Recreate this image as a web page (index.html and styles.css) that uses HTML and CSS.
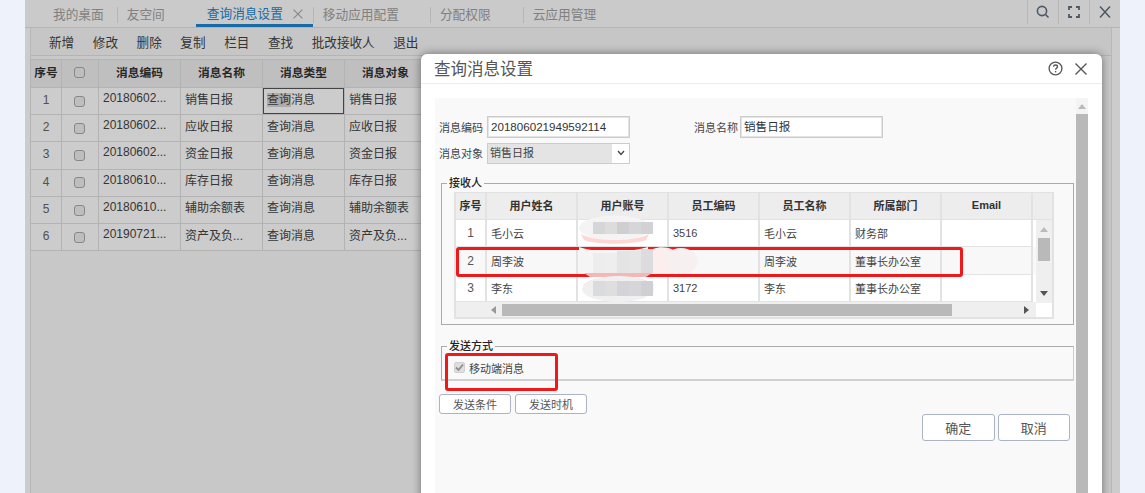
FILE: index.html
```html
<!DOCTYPE html>
<html lang="zh">
<head>
<meta charset="utf-8">
<title>查询消息设置</title>
<link rel="stylesheet" href="styles.css">
</head>
<body>
<div class="app">
  <nav class="tabs">
    <span class="tab tab-first">我的桌面</span>
    <span class="tab tab-sep tab-short">友空间</span>
    <span class="tab tab-active">查询消息设置<svg class="tab-x" width="10" height="10" viewBox="0 0 10 10"><path d="M0.5 0.5L9.5 9.5M9.5 0.5L0.5 9.5" stroke="#aaa" stroke-width="1.2" fill="none"/></svg></span>
    <span class="tab tab-sep">移动应用配置</span>
    <span class="tab tab-sep">分配权限</span>
    <span class="tab tab-sep tab-last">云应用管理</span>
    <div class="win-icons">
      <span class="win-icon"><svg width="16" height="16" viewBox="0 0 16 16"><circle cx="7" cy="7" r="4.6" stroke="#5f6f80" stroke-width="1.6" fill="none"/><path d="M10.5 10.5L13.5 13.5" stroke="#5f6f80" stroke-width="1.6"/></svg></span>
      <span class="win-icon"><svg width="16" height="16" viewBox="0 0 16 16"><path d="M3 6V3H6M10 3H13V6M13 10V13H10M6 13H3V10" stroke="#5f6f80" stroke-width="1.8" fill="none"/></svg></span>
      <span class="win-icon"><svg width="16" height="16" viewBox="0 0 16 16"><path d="M3 2.5L13 13.5M13 2.5L3 13.5" stroke="#5f6f80" stroke-width="1.5" fill="none"/></svg></span>
    </div>
  </nav>
  <div class="content">
    <div class="toolbar">
      <span>新增</span><span>修改</span><span>删除</span><span>复制</span><span>栏目</span><span>查找</span><span>批改接收人</span><span>退出</span>
    </div>
    <table class="list">
      <colgroup><col class="c-31"><col class="c-37"><col class="c-82"><col class="c-82"><col class="c-82"><col class="c-82"><col class="c-82"></colgroup>
      <thead><tr><th>序号</th><th class="mid"><i class="cb"></i></th><th>消息编码</th><th>消息名称</th><th>消息类型</th><th>消息对象</th><th></th></tr></thead>
      <tbody>
        <tr><td class="num">1</td><td class="mid"><i class="cb"></i></td><td>20180602...</td><td>销售日报</td><td class="focus"><span class="sel">查询</span>消息</td><td>销售日报</td><td></td></tr>
        <tr><td class="num">2</td><td class="mid"><i class="cb"></i></td><td>20180602...</td><td>应收日报</td><td>查询消息</td><td>应收日报</td><td></td></tr>
        <tr><td class="num">3</td><td class="mid"><i class="cb"></i></td><td>20180602...</td><td>资金日报</td><td>查询消息</td><td>资金日报</td><td></td></tr>
        <tr><td class="num">4</td><td class="mid"><i class="cb"></i></td><td>20180610...</td><td>库存日报</td><td>查询消息</td><td>库存日报</td><td></td></tr>
        <tr><td class="num">5</td><td class="mid"><i class="cb"></i></td><td>20180610...</td><td>辅助余额表</td><td>查询消息</td><td>辅助余额表</td><td></td></tr>
        <tr><td class="num">6</td><td class="mid"><i class="cb"></i></td><td>20190721...</td><td>资产及负...</td><td>查询消息</td><td>资产及负...</td><td></td></tr>
      </tbody>
    </table>
  </div>
  <div class="mask"></div>

  <section class="modal">
    <header class="modal-head">
      <h1>查询消息设置</h1>
      <svg class="help" width="15" height="15" viewBox="0 0 15 15"><circle cx="7.5" cy="7.5" r="6.4" stroke="#555" stroke-width="1.3" fill="none"/><path d="M5.5 5.8C5.6 4.5 6.5 4 7.5 4C8.7 4 9.5 4.7 9.5 5.7C9.5 7 7.6 7.1 7.6 8.8" stroke="#555" stroke-width="1.3" fill="none"/><rect x="6.9" y="10" width="1.4" height="1.4" fill="#555"/></svg>
      <svg class="close" width="14" height="14" viewBox="0 0 14 14"><path d="M1.5 1.5L12.5 12.5M12.5 1.5L1.5 12.5" stroke="#555" stroke-width="1.4" fill="none"/></svg>
    </header>
    <div class="panel">
      <div class="form">
        <div class="row">
          <label>消息编码</label><span class="input">201806021949592114</span>
          <label class="second">消息名称</label><span class="input">销售日报</span>
        </div>
        <div class="row row-2">
          <label>消息对象</label>
          <span class="select"><span class="select-val">销售日报</span><span class="select-arrow"><svg width="8" height="6" viewBox="0 0 8 6"><path d="M1 1L4 4.5L7 1" stroke="#444" stroke-width="1.3" fill="none"/></svg></span></span>
        </div>
        <fieldset class="group group-recv">
          <legend>接收人</legend>
          <div class="grid">
            <table class="people">
              <colgroup><col class="p-33"><col class="p-91"><col class="p-91"><col class="p-91"><col class="p-91"><col class="p-91"><col class="p-91"><col class="p-rest"></colgroup>
              <thead><tr><th>序号</th><th>用户姓名</th><th>用户账号</th><th>员工编码</th><th>员工名称</th><th>所属部门</th><th>Email</th><th></th></tr></thead>
              <tbody>
                <tr><td class="num">1</td><td>毛小云</td><td></td><td>3516</td><td>毛小云</td><td>财务部</td><td></td><td class="blank"></td></tr>
                <tr class="alt"><td class="num">2</td><td>周李波</td><td></td><td></td><td>周李波</td><td>董事长办公室</td><td></td><td class="blank"></td></tr>
                <tr><td class="num">3</td><td>李东</td><td></td><td>3172</td><td>李东</td><td>董事长办公室</td><td></td><td class="blank"></td></tr>
              </tbody>
            </table>
            <div class="hscroll">
              <span class="h-left"><svg width="5" height="8" viewBox="0 0 5 8"><path d="M5 0V8L0 4Z" fill="#999"/></svg></span>
              <span class="h-thumb"></span>
              <span class="h-right"><svg width="5" height="8" viewBox="0 0 5 8"><path d="M0 0V8L5 4Z" fill="#555"/></svg></span>
              <span class="h-corner"></span>
            </div>
            <div class="vbar">
              <svg class="v-up" width="8" height="5" viewBox="0 0 8 5"><path d="M0 5H8L4 0Z" fill="#bbb"/></svg>
              <span class="v-thumb"></span>
              <svg class="v-down" width="8" height="5" viewBox="0 0 8 5"><path d="M0 0H8L4 5Z" fill="#555"/></svg>
            </div>
          </div>
        </fieldset>
        <fieldset class="group group-send">
          <legend>发送方式</legend>
          <div class="check-row">
            <span class="check"><svg width="9" height="9" viewBox="0 0 9 9"><path d="M1 4.5L3.5 7L8 1.5" stroke="#8d8d8d" stroke-width="1.8" fill="none"/></svg></span>
            <span>移动端消息</span>
          </div>
        </fieldset>
        <div class="btn-row">
          <button class="btn">发送条件</button><button class="btn">发送时机</button>
        </div>
        <div class="ok-row">
          <button class="btn btn-big">确定</button><button class="btn btn-big">取消</button>
        </div>
      </div>
      <div class="vscroll">
        <svg class="vs-up" width="8" height="5" viewBox="0 0 8 5"><path d="M0 5H8L4 0Z" fill="#bbb"/></svg>
        <span class="vs-thumb"></span>
      </div>
    </div>
    <div class="mark mark-row"></div>
    <div class="mark mark-check"></div>
    <svg class="blur" width="130" height="90" viewBox="0 0 130 90">
      <ellipse cx="36" cy="13" rx="36" ry="12.5" fill="#f4f4f4"/>
      <path d="M2 19C17 27 55 27 70 19L67 25C52 30 19 30 5 25Z" fill="#ffd6d6"/>
      <rect x="14" y="7" width="12" height="12" fill="#d6d6d6"/><rect x="26" y="7" width="12" height="12" fill="#dcdcdc"/><rect x="38" y="7" width="12" height="12" fill="#cfcfd2"/><rect x="50" y="7" width="12" height="12" fill="#d6d6d8"/><rect x="62" y="7" width="12" height="12" fill="#d2d2d6"/>
      <path d="M0 32C17 38 49 38 69 32V59H0Z" fill="#f5f5f5"/>
      <path d="M74 34C84 30 97 33 101 42L112 59H72Z" fill="#fdeeee"/>
      <ellipse cx="102" cy="46" rx="17" ry="13" fill="#f7f0f0"/>
      <rect x="14" y="38" width="12" height="20" fill="#ededed"/><rect x="26" y="38" width="12" height="20" fill="#eeeeee"/><rect x="38" y="36" width="12" height="22" fill="#e4e4e4"/><rect x="50" y="36" width="12" height="22" fill="#e6e6e6"/><rect x="62" y="34" width="12" height="24" fill="#dcdcde"/>
      <path d="M5 58H73L67 62H11Z" fill="#f7b6b6"/>
      <path d="M5 70C12 60 62 58 75 70Z" fill="#f9b9b9"/>
      <ellipse cx="39" cy="74" rx="36" ry="13" fill="#f0f0f0"/>
      <rect x="14" y="66" width="12" height="15" fill="#d9dcdc"/><rect x="26" y="66" width="12" height="15" fill="#dedede"/><rect x="38" y="66" width="12" height="15" fill="#d4d4d8"/><rect x="50" y="66" width="12" height="15" fill="#d6d6da"/><rect x="62" y="66" width="12" height="15" fill="#d0d0d4"/>
    </svg>
  </section>
</div>
</body>
</html>
```

FILE: styles.css
```css
* { box-sizing: border-box; }
html, body { margin: 0; height: 493px; overflow: hidden; }
body {
  background: #edf2fb;
  font-family: "Liberation Sans", "Noto Sans CJK SC", sans-serif;
  font-size: 12px;
  color: #333;
}
.app {
  position: relative;
  margin: 0 25px;
  height: 493px;
  overflow: hidden;
  background: #fff;
  display: flex;
  flex-direction: column;
}
.mask {
  position: absolute;
  inset: 0;
  background: rgba(0, 0, 0, .2);
}

/* tabs */
.tabs {
  height: 28px;
  flex: none;
  display: flex;
  align-items: stretch;
  border-bottom: 1px solid #e2e2e2;
  font-size: 12.7px;
  color: #a2a2a2;
  background: #fdfdfd;
}
.tab {
  display: flex;
  align-items: center;
  height: 27px;
  padding: 2px 31px 2px 10px;
  white-space: nowrap;
}
.tab-first { margin-left: 15px; padding-left: 13px; padding-right: 13px; }
.tab-short { padding-right: 31px; }
.tab-last { margin-left: 1px; }
.tab-sep { position: relative; }
.tab-sep::before {
  content: "";
  position: absolute;
  left: 0;
  top: 7px;
  bottom: 4px;
  border-left: 1px solid #e4e4e4;
}
.tab-active {
  color: #1e86cf;
  padding: 2px 10px 2px 11px;
  border-bottom: 3px solid #1e86cf;
  margin-bottom: -1px;
  height: 27px;
  width: 117px;
}
.tab-x { margin: 3px 0 0 10px; }
.win-icons { margin-left: auto; display: flex; height: 24px; }
.win-icon {
  width: 31px;
  border-left: 1px solid #e6e6e6;
  display: flex;
  align-items: center;
  justify-content: center;
}

/* main content */
.content {
  flex: 1;
  margin: 0 8px 0 5px;
  border-left: 1px solid #e6e6e6;
  border-right: 1px solid #e6e6e6;
  background: #fbfbfb;
}
.toolbar {
  height: 28px;
  display: flex;
  align-items: center;
  gap: 18.6px;
  padding: 0 0 1px 18px;
  border-bottom: 1px solid #e2e2e2;
  font-size: 12.6px;
  color: #444;
  background: #f8f8f8;
}
.list {
  margin: 3px 0 0 -1px;
  table-layout: fixed;
  width: 447px;
  border-collapse: separate;
  border-spacing: 0;
  border-left: 1px solid #e0e0e0;
  border-top: 1px solid #e0e0e0;
}
.c-31 { width: 31px; }
.c-37 { width: 37px; }
.c-82 { width: 82px; }
.list th, .list td {
  border-right: 1px solid #e0e0e0;
  border-bottom: 1px solid #e0e0e0;
  padding: 0 4px 6px;
  white-space: nowrap;
  overflow: hidden;
}
.list th {
  height: 28px;
  background: #efefef;
  font-weight: 700;
  font-size: 11.7px;
  color: #333;
  padding: 0 0 5px;
}
.list td { height: 27.2px; background: #fff; color: #444; }
.list td.num { text-align: center; color: #666; padding: 0 4px 2px; }
.list td.mid { text-align: center; padding: 0 2px 1px 0; }
.list th.mid { text-align: center; padding: 0 2px 4px 0; }
.list .focus { box-shadow: inset 0 0 0 1px #555; }
.sel { background: #d8d8d8; }
.cb {
  display: inline-block;
  width: 11px;
  height: 11px;
  vertical-align: middle;
  border: 1px solid #aaa;
  border-radius: 3px;
  background: #eee;
}

/* modal */
.modal {
  position: absolute;
  left: 396px;
  top: 54px;
  width: 681px;
  height: 460px;
  background: #fff;
  border-radius: 6px;
  box-shadow: 0 0 10px rgba(0, 0, 0, .45);
  display: flex;
  flex-direction: column;
  color: #333;
  font-size: 11px;
}
.modal-head {
  height: 30px;
  flex: none;
  display: flex;
  align-items: center;
  padding: 0 14px 0 13px;
  border-bottom: 1px solid #ececec;
}
.modal-head h1 {
  margin: 0;
  font-size: 16.5px;
  font-weight: 400;
  color: #555;
  flex: 1;
  position: relative;
  top: -1px;
}
.help { margin-right: 11px; }
.panel {
  flex: 1;
  margin: 14px 14px 0 14px;
  background: #f9f9f9;
  display: flex;
}
.form { flex: 1; padding: 18px 0 0 4px; min-width: 0; }
.vscroll {
  width: 12px;
  flex: none;
  background: #f4f4f4;
  display: flex;
  flex-direction: column;
  align-items: center;
}
.vs-up { margin: 6px 0 5px; flex: none; }
.vs-thumb { flex: 1; width: 100%; background: #b9b9b9; }
.row { display: flex; align-items: center; height: 22px; color: #444; }
.row label { width: 48px; flex: none; white-space: nowrap; }
.row .second { margin-left: 64px; width: 46px; }
.input {
  width: 143px;
  height: 22px;
  background: #fff;
  border: 1px solid #ccc;
  box-shadow: inset 0 0 0 1px #e4e4e4;
  line-height: 20px;
  padding-left: 3px;
  color: #333;
  font-size: 11.6px;
}
.row-2 { margin-top: 4px; }
.select {
  width: 143px;
  height: 21px;
  display: flex;
  border: 1px solid #ccc;
  background: #fff;
}
.select-val { flex: 1; background: #e4e4e4; line-height: 19px; padding-left: 2px; }
.select-arrow { width: 17px; display: flex; align-items: center; justify-content: center; }

fieldset.group {
  margin: 0 0 0 2px;
  border: 1px solid #aaa;
  min-width: 0;
  width: 633px;
}
fieldset.group legend {
  padding: 0 2px;
  margin-left: -7px;
  line-height: 14px;
  font-weight: 500;
  color: #222;
}
.group-recv { margin-top: 12px !important; padding: 2px 19px 4px 12px; height: 149px; }
.group-send {
  margin-top: 14px !important;
  padding: 0 12px;
  height: 42px;
  border-bottom: 2px solid #d0d0d0 !important;
  border-right-color: #ccc !important;
}
.grid {
  position: relative;
  width: 600px;
  height: 127px;
  border: 2px solid #e2e2e2;
  border-top-width: 1px;
  background: #fff;
  overflow: hidden;
}
.people {
  table-layout: fixed;
  width: 598px;
  border-collapse: separate;
  border-spacing: 0;
}
.p-33 { width: 31px; }
.p-91 { width: 91px; }
.p-rest { width: 21px; }
.people th, .people td {
  border-right: 2px solid #e2e2e2;
  border-bottom: 1px solid #e2e2e2;
  white-space: nowrap;
  padding: 0 4px;
}
.people th {
  height: 27px;
  background: #ededed;
  font-weight: 700;
  color: #333;
  padding: 0 0 2px;
}
.people td { height: 27.4px; color: #444; background: #fff; font-size: 11px; }
.people .alt td { background: #f8f8f8; }
.people .num { text-align: center; color: #555; font-size: 12px; }
.people .blank { border-bottom: 0; border-right: 0; }
.hscroll {
  display: flex;
  align-items: center;
  height: 16px;
  background: #efefef;
}
.h-left { width: 46px; text-align: right; padding-right: 6px; line-height: 0; flex: none; }
.h-thumb { width: 450px; height: 12px; background: #b9b9b9; flex: none; }
.h-right { flex: 1; text-align: right; padding-right: 7px; line-height: 0; }
.h-corner { width: 16px; height: 100%; background: #fff; flex: none; }
.vbar {
  position: absolute;
  right: 0;
  top: 27px;
  width: 16px;
  height: 83px;
  background: #efefef;
  display: flex;
  flex-direction: column;
  align-items: center;
}
.v-up { margin: 7px 0 6px; flex: none; }
.v-thumb { width: 12px; height: 23px; background: #b9b9b9; flex: none; }
.v-down { margin-top: auto; margin-bottom: 7px; flex: none; }

.check-row { display: flex; align-items: center; height: 25px; margin-top: 2px; color: #444; }
.check {
  width: 11px;
  height: 11px;
  margin-right: 4px;
  border: 1px solid #d0d0d0;
  border-radius: 2px;
  background: #dedede;
  display: flex;
  align-items: center;
  justify-content: center;
}
.btn-row { display: flex; gap: 4px; margin-top: 13px; }
.btn {
  width: 72px;
  height: 20px;
  padding: 0;
  background: #fff;
  border: 1px solid #aab4c4;
  border-radius: 3px;
  font: inherit;
  font-size: 11px;
  color: #555;
}
.ok-row { display: flex; justify-content: flex-end; gap: 3px; margin-right: 6px; }
.btn-big { width: 72.5px; height: 27px; font-size: 13px; }

.mark {
  position: absolute;
  border: 3px solid #f01818;
  border-radius: 3px;
}
.mark-row { left: 35px; top: 193px; width: 507px; height: 30px; }
.mark-check { left: 24px; top: 299px; width: 113px; height: 38px; }
.blur { position: absolute; left: 158px; top: 161px; }
```
